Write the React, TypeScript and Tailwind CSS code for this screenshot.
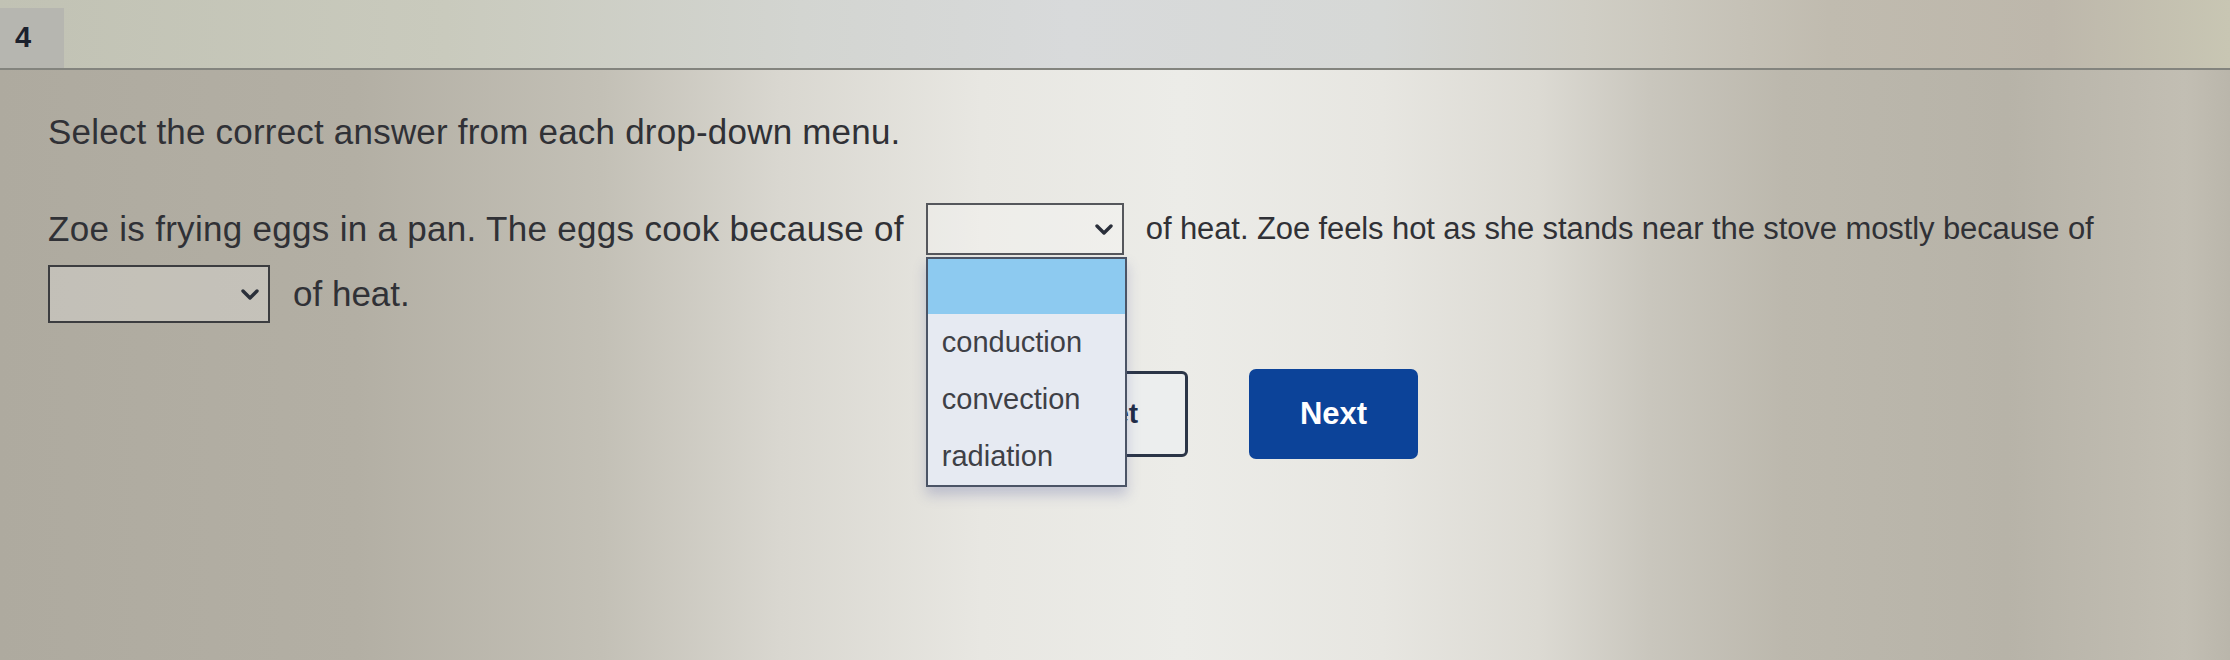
import { useState } from "react";

const OPTIONS = ["conduction", "convection", "radiation"];

function Chevron() {
    return (
        <svg width="18" height="11" viewBox="0 0 18 11" fill="none" className="shrink-0">
            <polyline points="2,2 9,9 16,2" stroke="#2a2f3a" strokeWidth="3.4" strokeLinecap="round" strokeLinejoin="round" />
        </svg>
    );
}

function Blank({ className, open }: { className: string; open?: boolean }) {
    return (
        <div className="relative">
            <div className={`flex items-center justify-end bg-white/25 pr-[9px] ${className}`}>
                <Chevron />
            </div>
            {open && (
                <ul className="absolute left-0 top-[calc(100%+2px)] z-10 w-[201px] border-2 border-[#4b5466] bg-[#e6eaf2] shadow-[0_8px_12px_rgba(70,80,150,0.25)]">
                    <li className="h-[55px] bg-[#8dcaf0]" />
                    {OPTIONS.map((o) => (
                        <li key={o} className="flex h-[57px] items-center pl-[14px] text-[29px] tracking-normal text-[#3e4046]">
                            {o}
                        </li>
                    ))}
                </ul>
            )}
        </div>
    );
}

export default function App() {
    const [open] = useState(true);

    return (
        <div className="h-[660px] w-full overflow-hidden bg-[linear-gradient(90deg,#aeaa9f_0%,#b3afa4_16%,#c3c0b6_27%,#d9d7d0_35%,#e8e7e2_44%,#ecece8_53%,#e7e6e1_62%,#dcdad3_69%,#c9c6bd_74%,#bcb8ad_80%,#b7b3a8_90%,#c2beb3_98%,#bab6ab_100%)] font-['Liberation_Sans',Arial,sans-serif] text-[#303136]">
            <header className="h-[70px] border-b-2 border-[#83847e] bg-[linear-gradient(90deg,#c1c2b4_0%,#c9cabd_20%,#d3d5d1_36%,#d8dadb_48%,#d6d8d6_62%,#d0cec5_71%,#c0bbaf_82%,#bdb7ab_92%,#c8c6b3_100%)] pt-[8px]">
                <div className="flex h-[60px] w-[64px] items-center bg-[#b6b6b0] pl-[15px] text-[29px] font-bold text-[#1b212d]">
                    4
                </div>
            </header>

            <main className="pl-[48px] pt-[42px]">
                <p className="text-[35px] leading-[40px] tracking-[0.2px]">
                    Select the correct answer from each drop-down menu.
                </p>

                <div className="mt-[48px] flex h-[58px] items-center gap-[22px]">
                    <span className="text-[35px] tracking-[0.3px]">Zoe is frying eggs in a pan. The eggs cook because of</span>
                    <Blank className="h-[52px] w-[198px] border-2 border-[#55575c]" open={open} />
                    <span className="text-[31px] tracking-[-0.1px]">
                        of heat. Zoe feels hot as she stands near the stove mostly because of
                    </span>
                </div>

                <div className="mt-[7px] flex h-[58px] items-center gap-[23px]">
                    <Blank className="h-[58px] w-[222px] border-2 border-[#3c3d40]" />
                    <span className="text-[35px]">of heat.</span>
                </div>

                <div className="ml-[964px] mt-[46px] flex items-center gap-[61px]">
                    <button className="h-[86px] w-[176px] rounded-[6px] border-[3px] border-[#2b3547] bg-[#eceeee] text-[28px] font-bold text-[#1f2b45]">
                        Reset
                    </button>
                    <button className="h-[90px] w-[169px] rounded-[7px] bg-[#0c4399] text-[31px] font-bold text-white">
                        Next
                    </button>
                </div>
            </main>
        </div>
    );
}
